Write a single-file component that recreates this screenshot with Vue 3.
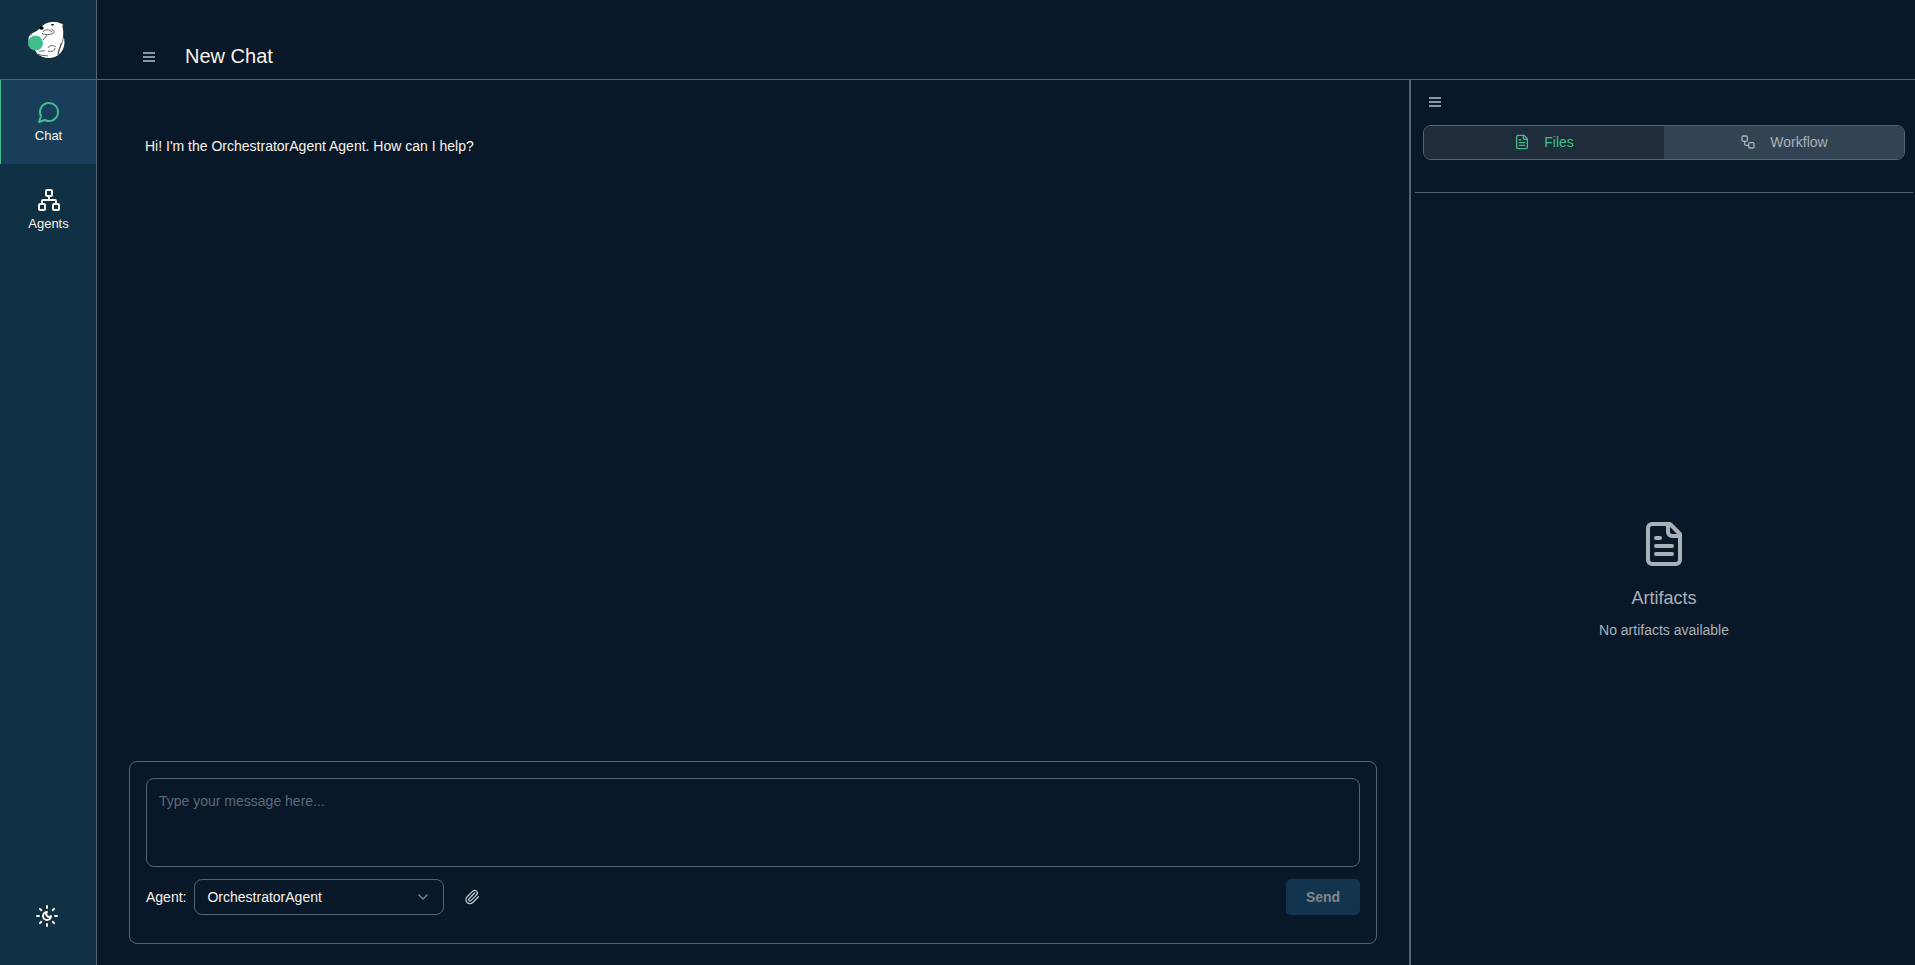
<script setup>
import { ref } from 'vue'

const message = ref('')
const agent = ref('OrchestratorAgent')
const agents = ['OrchestratorAgent']
</script>

<template>
  <div class="app">
    <nav class="sidebar" aria-label="Main">
      <div class="brand">
        <svg width="38" height="40" viewBox="0 0 38 40" role="img" aria-label="Logo">
          <path class="fur" d="M13 8C16 4 20 1.800 25 1.500C29 1.200 32 1.800 34 3.200C36 3 37 4.500 35.800 6.500C36.800 9.500 37 13 36.500 17C38.500 22 37.500 29 33 33.500C27 39.500 17 39.500 10.500 34L7 29C2 27 0 18 3 14.500C7 12 10 11.500 13 8Z" />
          <path class="line" d="M36.500 17C36 23 32 28 31 35M34 23C34 27 31 30 31 34M16 12C18 9 22 9 25 12M15 13.500C18 15 24 15 27 12.500M27 12.500C28 10 25 10 24 9M20 15L16 20M12 31C14 32 16 30 18 31M21 28C23 24 28 26 29 27M28 28C28 31 24 32 21 31M11 34C14 36 18 35 21 36M2 16L5 14" />
          <path class="outline" d="M13 8C16 4 20 1.800 25 1.500C29 1.200 32 1.800 34 3.200C36 3 37 4.500 35.800 6.500C36.800 9.500 37 13 36.500 17" />
          <ellipse cx="14.500" cy="8" rx="2.200" ry="1.800" />
          <ellipse cx="25.500" cy="4.800" rx="1.600" ry=".8" />
          <circle class="ball" cx="8.500" cy="23" r="7.500" />
        </svg>
      </div>
      <button class="nav-item active" type="button">
        <svg class="stroke" width="24" height="24" viewBox="0 0 24 24" aria-hidden="true">
          <path d="M7.900 20A9 9 0 1 0 4 16.100L2 22Z" />
        </svg>
        <span>Chat</span>
      </button>
      <button class="nav-item" type="button">
        <svg class="stroke" width="24" height="24" viewBox="0 0 24 24" aria-hidden="true">
          <rect x="16" y="16" width="6" height="6" rx="1" />
          <rect x="2" y="16" width="6" height="6" rx="1" />
          <rect x="9" y="2" width="6" height="6" rx="1" />
          <path d="M5 16v-3a1 1 0 0 1 1-1h12a1 1 0 0 1 1 1v3M12 12V8" />
        </svg>
        <span>Agents</span>
      </button>
      <button class="theme" type="button" aria-label="Toggle theme">
        <svg class="stroke" width="24" height="24" viewBox="0 0 24 24" aria-hidden="true">
          <path d="M12 8a2.830 2.830 0 0 0 4 4 4 4 0 1 1-4-4M12 2v2M12 20v2M4.900 4.900l1.400 1.400M17.700 17.700l1.400 1.400M2 12h2M20 12h2M6.300 17.700l-1.400 1.400M19.100 4.900l-1.400 1.400" />
        </svg>
      </button>
    </nav>

    <div class="main">
      <header class="header">
        <button class="menu" type="button" aria-label="Open chat list">
          <svg width="12" height="10" viewBox="0 0 12 10" aria-hidden="true"><path d="M0 0h12v2H0zM0 4h12v2H0zM0 8h12v2H0z" /></svg>
        </button>
        <h1>New Chat</h1>
      </header>

      <div class="content">
        <main class="chat">
          <div class="messages">
            <p>Hi! I'm the OrchestratorAgent Agent. How can I help?</p>
          </div>
          <form class="composer" @submit.prevent>
            <textarea v-model="message" aria-label="Message" placeholder="Type your message here..."></textarea>
            <div class="controls">
              <label for="agent">Agent:</label>
              <div class="select">
                <select id="agent" v-model="agent">
                  <option v-for="name in agents" :key="name">{{ name }}</option>
                </select>
                <svg class="stroke" width="16" height="16" viewBox="0 0 24 24" aria-hidden="true"><path d="m6 9 6 6 6-6" /></svg>
              </div>
              <button class="attach" type="button" aria-label="Attach file">
                <svg class="stroke" width="16" height="16" viewBox="0 0 24 24" aria-hidden="true">
                  <path d="m16 6-8.414 8.586a2 2 0 0 0 2.829 2.829l8.414-8.586a4 4 0 1 0-5.657-5.657l-8.379 8.551a6 6 0 1 0 8.485 8.485l8.379-8.551" />
                </svg>
              </button>
              <button class="send" type="submit" disabled>Send</button>
            </div>
          </form>
        </main>

        <aside class="panel">
          <button class="menu" type="button" aria-label="Collapse panel">
            <svg width="12" height="10" viewBox="0 0 12 10" aria-hidden="true"><path d="M0 0h12v2H0zM0 4h12v2H0zM0 8h12v2H0z" /></svg>
          </button>
          <div class="tabs" role="tablist">
            <button class="tab selected" type="button" role="tab" aria-selected="true">
              <svg class="stroke" width="16" height="16" viewBox="0 0 24 24" aria-hidden="true">
                <path d="M15 2H6a2 2 0 0 0-2 2v16a2 2 0 0 0 2 2h12a2 2 0 0 0 2-2V7ZM14 2v4a2 2 0 0 0 2 2h4M10 9H8M16 13H8M16 17H8" />
              </svg>
              <span>Files</span>
            </button>
            <button class="tab" type="button" role="tab" aria-selected="false">
              <svg class="stroke" width="16" height="16" viewBox="0 0 24 24" aria-hidden="true">
                <rect x="3" y="3" width="8" height="8" rx="2" />
                <path d="M7 11v4a2 2 0 0 0 2 2h4" />
                <rect x="13" y="13" width="8" height="8" rx="2" />
              </svg>
              <span>Workflow</span>
            </button>
          </div>
          <section class="empty">
            <svg class="stroke" width="48" height="48" viewBox="0 0 24 24" aria-hidden="true">
              <path d="M15 2H6a2 2 0 0 0-2 2v16a2 2 0 0 0 2 2h12a2 2 0 0 0 2-2V7ZM14 2v4a2 2 0 0 0 2 2h4M10 9H8M16 13H8M16 17H8" />
            </svg>
            <h2>Artifacts</h2>
            <p>No artifacts available</p>
          </section>
        </aside>
      </div>
    </div>
  </div>
</template>

<style>
body {
  background: #091828;
}
</style>

<style scoped>
.app {
  --line: #536574;
  --text: #faf3e8;
  --muted: #aab1b8;
  --green: #41be8c;
  display: flex;
  height: 100vh;
  background: #091828;
  color: var(--text);
  font: 14px/20px "Liberation Sans", Arial, sans-serif;
}
.app *,
.app {
  box-sizing: border-box;
}
button {
  margin: 0;
  padding: 0;
  border: 0;
  background: none;
  color: inherit;
  font: inherit;
}
h1, h2, p {
  margin: 0;
  font-weight: 400;
}
svg {
  display: block;
  flex: none;
}
.stroke {
  fill: none;
  stroke: currentColor;
  stroke-width: 2;
  stroke-linecap: round;
  stroke-linejoin: round;
}
.sidebar {
  display: flex;
  flex: none;
  flex-direction: column;
  gap: 4px;
  width: 97px;
  border-right: 1px solid var(--line);
  background: #103144;
}
.brand {
  display: flex;
  align-items: center;
  justify-content: center;
  height: 80px;
  margin-bottom: -4px;
  padding-right: 4px;
  border-bottom: 1px solid var(--line);
}
.fur { fill: #fff; }
.line { fill: none; stroke: #222; stroke-width: .7; }
.outline { fill: none; stroke: #111; stroke-width: .8; }
.ball { fill: var(--green); }
.nav-item {
  display: flex;
  flex-direction: column;
  align-items: center;
  justify-content: center;
  gap: 2px;
  height: 84px;
  padding-top: 2px;
  border-left: 1px solid transparent;
  font-size: 13px;
}
.nav-item.active {
  border-left-color: var(--green);
  background: #183e5b;
}
.nav-item.active svg {
  color: var(--green);
}
.theme {
  display: flex;
  justify-content: center;
  margin-top: auto;
  padding: 12px 3px 37px 0;
}
.main {
  display: flex;
  flex: 1;
  flex-direction: column;
  min-width: 0;
}
.header {
  display: flex;
  flex: none;
  align-items: flex-end;
  gap: 24px;
  height: 80px;
  padding: 0 40px 9px;
  border-bottom: 1px solid var(--line);
}
.menu {
  padding: 6px;
}
.header .menu {
  padding: 8px 6px;
}
.menu svg {
  fill: #8497a4;
}
h1 {
  font-size: 20px;
  line-height: 28px;
}
.content {
  display: flex;
  flex: 1;
  min-height: 0;
}
.chat {
  display: flex;
  flex: 1;
  flex-direction: column;
  min-width: 0;
  padding: 32px 32px 21px;
}
.messages {
  flex: 1;
  padding: 24px 16px;
}
.composer {
  display: flex;
  flex-direction: column;
  gap: 12px;
  padding: 16px 16px 28px;
  border: 1px solid var(--line);
  border-radius: 8px;
}
textarea {
  width: 100%;
  height: 89px;
  padding: 12px;
  border: 1px solid var(--line);
  border-radius: 8px;
  outline: 0;
  background: transparent;
  color: inherit;
  font: inherit;
  resize: none;
}
textarea::placeholder {
  color: #5d6977;
  opacity: 1;
}
.controls {
  display: flex;
  align-items: center;
  gap: 8px;
}
.select {
  display: grid;
  align-items: center;
  width: 250px;
}
.select > * {
  grid-area: 1 / 1;
}
.select svg {
  justify-self: end;
  margin-right: 13px;
  color: #7f868c;
  pointer-events: none;
}
select {
  width: 100%;
  height: 36px;
  padding: 0 12px;
  border: 1px solid var(--line);
  border-radius: 8px;
  appearance: none;
  background: transparent;
  color: inherit;
  font: inherit;
}
.attach {
  padding: 8px 12px;
  color: #b8c5cf;
}
.send {
  width: 74px;
  height: 36px;
  margin-left: auto;
  border-radius: 5px;
  background: #12344f;
  color: #818689;
  font-weight: 700;
}
.panel {
  display: flex;
  flex: 0 1 506px;
  flex-direction: column;
  border-left: 2px solid var(--line);
}
.panel .menu {
  align-self: flex-start;
  margin: 11px 12px 12px;
}
.tabs {
  display: flex;
  height: 35px;
  margin: 0 10px 32px 12px;
  overflow: hidden;
  border: 1px solid var(--line);
  border-radius: 8px;
}
.tab {
  display: flex;
  flex: 1;
  align-items: center;
  justify-content: center;
  gap: 14px;
  padding-bottom: 2px;
  background: #324354;
  color: var(--muted);
}
.tab.selected {
  background: #1f2c3b;
  color: var(--green);
}
.empty {
  display: flex;
  flex: 1;
  flex-direction: column;
  align-items: center;
  justify-content: center;
  margin: 0 2px 0 4px;
  padding-top: 2px;
  border-top: 1px solid var(--line);
  color: var(--muted);
}
h2 {
  margin: 16px 0 8px;
  font-size: 18px;
  line-height: 28px;
}
</style>
